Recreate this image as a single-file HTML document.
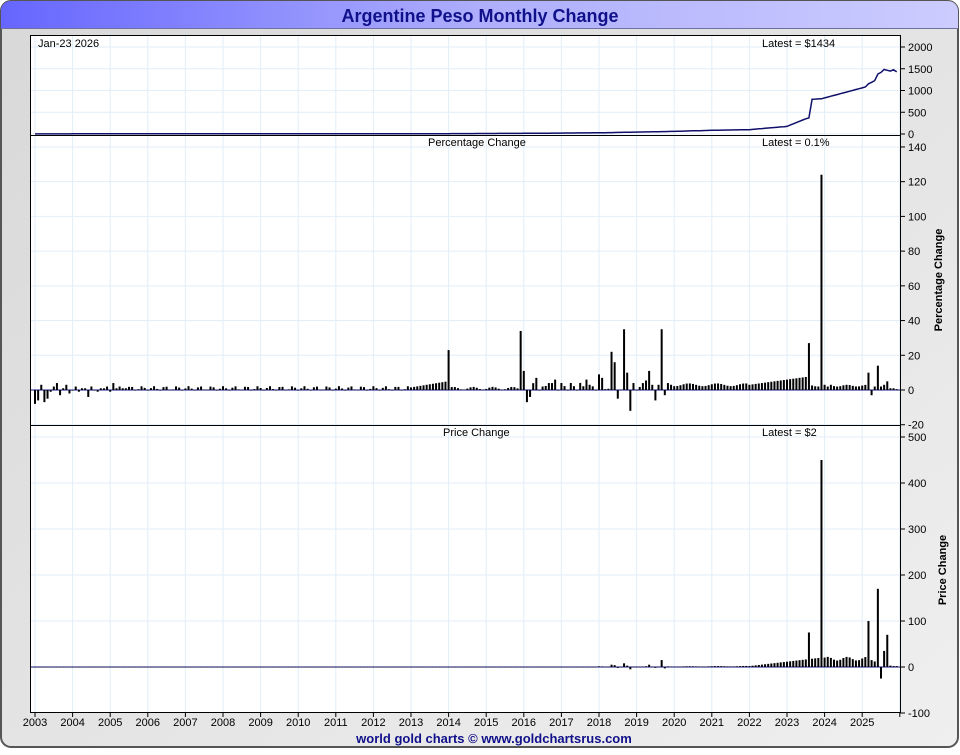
<!DOCTYPE html>
<html><head><meta charset="utf-8"><style>
body{margin:0;width:960px;height:750px;overflow:hidden;background:#fff;font-family:"Liberation Sans",sans-serif}
</style></head><body>
<svg id="s" width="960" height="750" xmlns="http://www.w3.org/2000/svg" font-family="Liberation Sans, sans-serif">
<defs>
<linearGradient id="tb" x1="0" x2="1"><stop offset="0" stop-color="#6666ff"/><stop offset="0.5" stop-color="#aeaefc"/><stop offset="1" stop-color="#ccccff"/></linearGradient>
<linearGradient id="bg" x1="0" x2="1" y1="0" y2="1"><stop offset="0" stop-color="#d8d8d8"/><stop offset="1" stop-color="#efefef"/></linearGradient>
</defs>
<rect x="1" y="1" width="957" height="746" rx="10" fill="url(#bg)" stroke="#555" stroke-width="2"/>
<path d="M1 28 V11 A10 10 0 0 1 11 1 H948 A10 10 0 0 1 958 11 V28 Z" fill="url(#tb)"/>
<line x1="1" y1="28.5" x2="958" y2="28.5" stroke="#7070a0"/>
<text x="480" y="22" text-anchor="middle" font-size="18" font-weight="bold" fill="#10108a">Argentine Peso Monthly Change</text>
<rect x="30.5" y="35.5" width="870" height="677" fill="#fff" stroke="#000"/>
<g id="grid"></g>
<g id="data"></g>
<line x1="30" y1="135.5" x2="901" y2="135.5" stroke="#000"/>
<line x1="30" y1="425.5" x2="901" y2="425.5" stroke="#000"/>
<rect x="30.5" y="35.5" width="870" height="677" fill="none" stroke="#000"/>
<g font-size="11" fill="#000">
<text x="38" y="47">Jan-23  2026</text>
<text x="762" y="47">Latest = $1434</text>
<text x="428" y="146">Percentage Change</text>
<text x="762" y="146">Latest = 0.1%</text>
<text x="443" y="436">Price Change</text>
<text x="762" y="436">Latest = $2</text>
<text transform="translate(942,280) rotate(-90)" text-anchor="middle" font-weight="bold">Percentage Change</text>
<text transform="translate(946,570) rotate(-90)" text-anchor="middle" font-weight="bold">Price Change</text>
</g>
<g id="axes" font-size="11"></g>
<text x="494" y="743" text-anchor="middle" font-size="13" font-weight="bold" fill="#10108a">world gold charts © www.goldchartsrus.com</text>
</svg>
<script>
var NS="http://www.w3.org/2000/svg";
function el(p,t,a,txt){var e=document.createElementNS(NS,t);for(var k in a)e.setAttribute(k,a[k]);if(txt!=null)e.textContent=txt;document.getElementById(p).appendChild(e);return e;}
var X0=35,YR=37.6,MW=YR/12;
function mx(m){return X0+m*MW;}
for(var y=0;y<=23;y++){var x=X0+y*YR;el('grid','line',{x1:x,x2:x,y1:36,y2:712,stroke:'#e2eef8'});
 el('axes','line',{x1:x,x2:x,y1:712,y2:717,stroke:'#000'});
 if(y<23)el('axes','text',{x:x,y:726,'text-anchor':'middle'},String(2003+y));}
function hg(vals,y0,k,ya,yb){vals.forEach(function(v){var yy=y0-v*k;if(yy>ya&&yy<yb)el('grid','line',{x1:30,x2:900,y1:yy,y2:yy,stroke:'#e2eef8'});
 el('axes','line',{x1:900,x2:905,y1:yy,y2:yy,stroke:'#000'});el('axes','text',{x:908,y:yy+4},String(v));});}
hg([0,500,1000,1500,2000],134,0.0435,36,135);
hg([-20,0,20,40,60,80,100,120,140],390,1.736,136,425);
hg([-100,0,100,200,300,400,500],667,0.46,426,712);
var N=276,pc=[],pr=[];
for(var m=0;m<N;m++){var v;
 if(m<30)v=[-8,-6,3,-7,-5,-1,2,4,-3,1,3,-2,0,2,-1,1,1,-4,2,0,-1,1,1,2,-1,4,1,2,1,1][m];
 else if(m<120)v=1+Math.sin(m*1.7)*1.2;
 else if(m<132)v=1.5+(m-120)*0.3;
 else if(m<155)v=1+Math.sin(m)*0.8;
 else if(m<180)v=2+Math.sin(m*2.1)*2.5;
 else if(m<204)v=3+Math.sin(m*1.3)*3;
 else if(m<228)v=3+Math.sin(m*0.7)*0.8;
 else v=Math.min(3+(m-228)*0.25,7.5);
 pc.push(v);}
var sp={132:23,155:34,156:11,157:-7,158:-4,160:7,162:2,164:4,166:6,176:6,177:3,180:9,181:7,184:22,185:16,186:-5,188:35,189:10,190:-12,191:4,194:4,196:11,197:3,198:-6,199:3,200:35,201:-3,202:4,247:27,251:124,252:3,253:2,254:3,266:10,267:-3,268:2,269:14,270:2,271:3,272:5,273:1,274:1,275:0.5};
for(var m=248;m<266;m++)if(!(m in sp))pc[m]=2.5+Math.sin(m)*0.5;
for(var k in sp)pc[k]=sp[k];
var P=[];
var anch=[[0,3],[132,8],[156,15],[180,28],[204,60],[216,85],[228,100],[240,175],[246,350],[247,370],[248,800],[251,810],[265,1080],[266,1180],[268,1200],[269,1400],[272,1480],[275,1434]];
function lerp(m){for(var i=0;i<anch.length-1;i++){var a=anch[i],b=anch[i+1];if(m>=a[0]&&m<=b[0])return a[1]+(b[1]-a[1])*(m-a[0])/(b[0]-a[0]);}return 1434;}
var pts=[];for(var m=0;m<N;m++){var v=lerp(m);if(m>=266)v+=Math.sin(m*2)*30;P[m]=v;pts.push(mx(m).toFixed(1)+','+(134-v*0.0435).toFixed(1));}
el('data','polyline',{points:pts.join(' '),fill:'none',stroke:'#10106a','stroke-width':1.5});
for(var m=0;m<N;m++){var v;
 if(m<180)v=0.3;else if(m<228)v=Math.max(0.5,pc[m]*P[m]/100*0.6);
 else if(m<252)v=2+(m-228)*0.8;else v=18+Math.sin(m)*4;
 if(m>=180&&m<228&&pc[m]<0)v=pc[m]*0.3;
 pr.push(v);}
var psp={184:5,185:4,186:-2,188:8,189:3,190:-5,196:5,200:15,201:-3,247:75,251:450,266:100,267:15,268:12,269:170,270:-25,271:35,272:70,273:3,274:2,275:2};
for(var k in psp)pr[k]=psp[k];
el('data','line',{x1:30,x2:900,y1:390,y2:390,stroke:'#10108a'});
el('data','line',{x1:30,x2:900,y1:667,y2:667,stroke:'#10108a'});
function bar(x,y0,h){var y=h>0?y0-h:y0;el('data','rect',{x:x-1,y:y,width:2,height:Math.max(Math.abs(h),0.6),fill:'#000'});}
for(var m=0;m<N;m++){bar(mx(m),390,pc[m]*1.736);bar(mx(m),667,pr[m]*0.46);}
</script>
</body></html>
